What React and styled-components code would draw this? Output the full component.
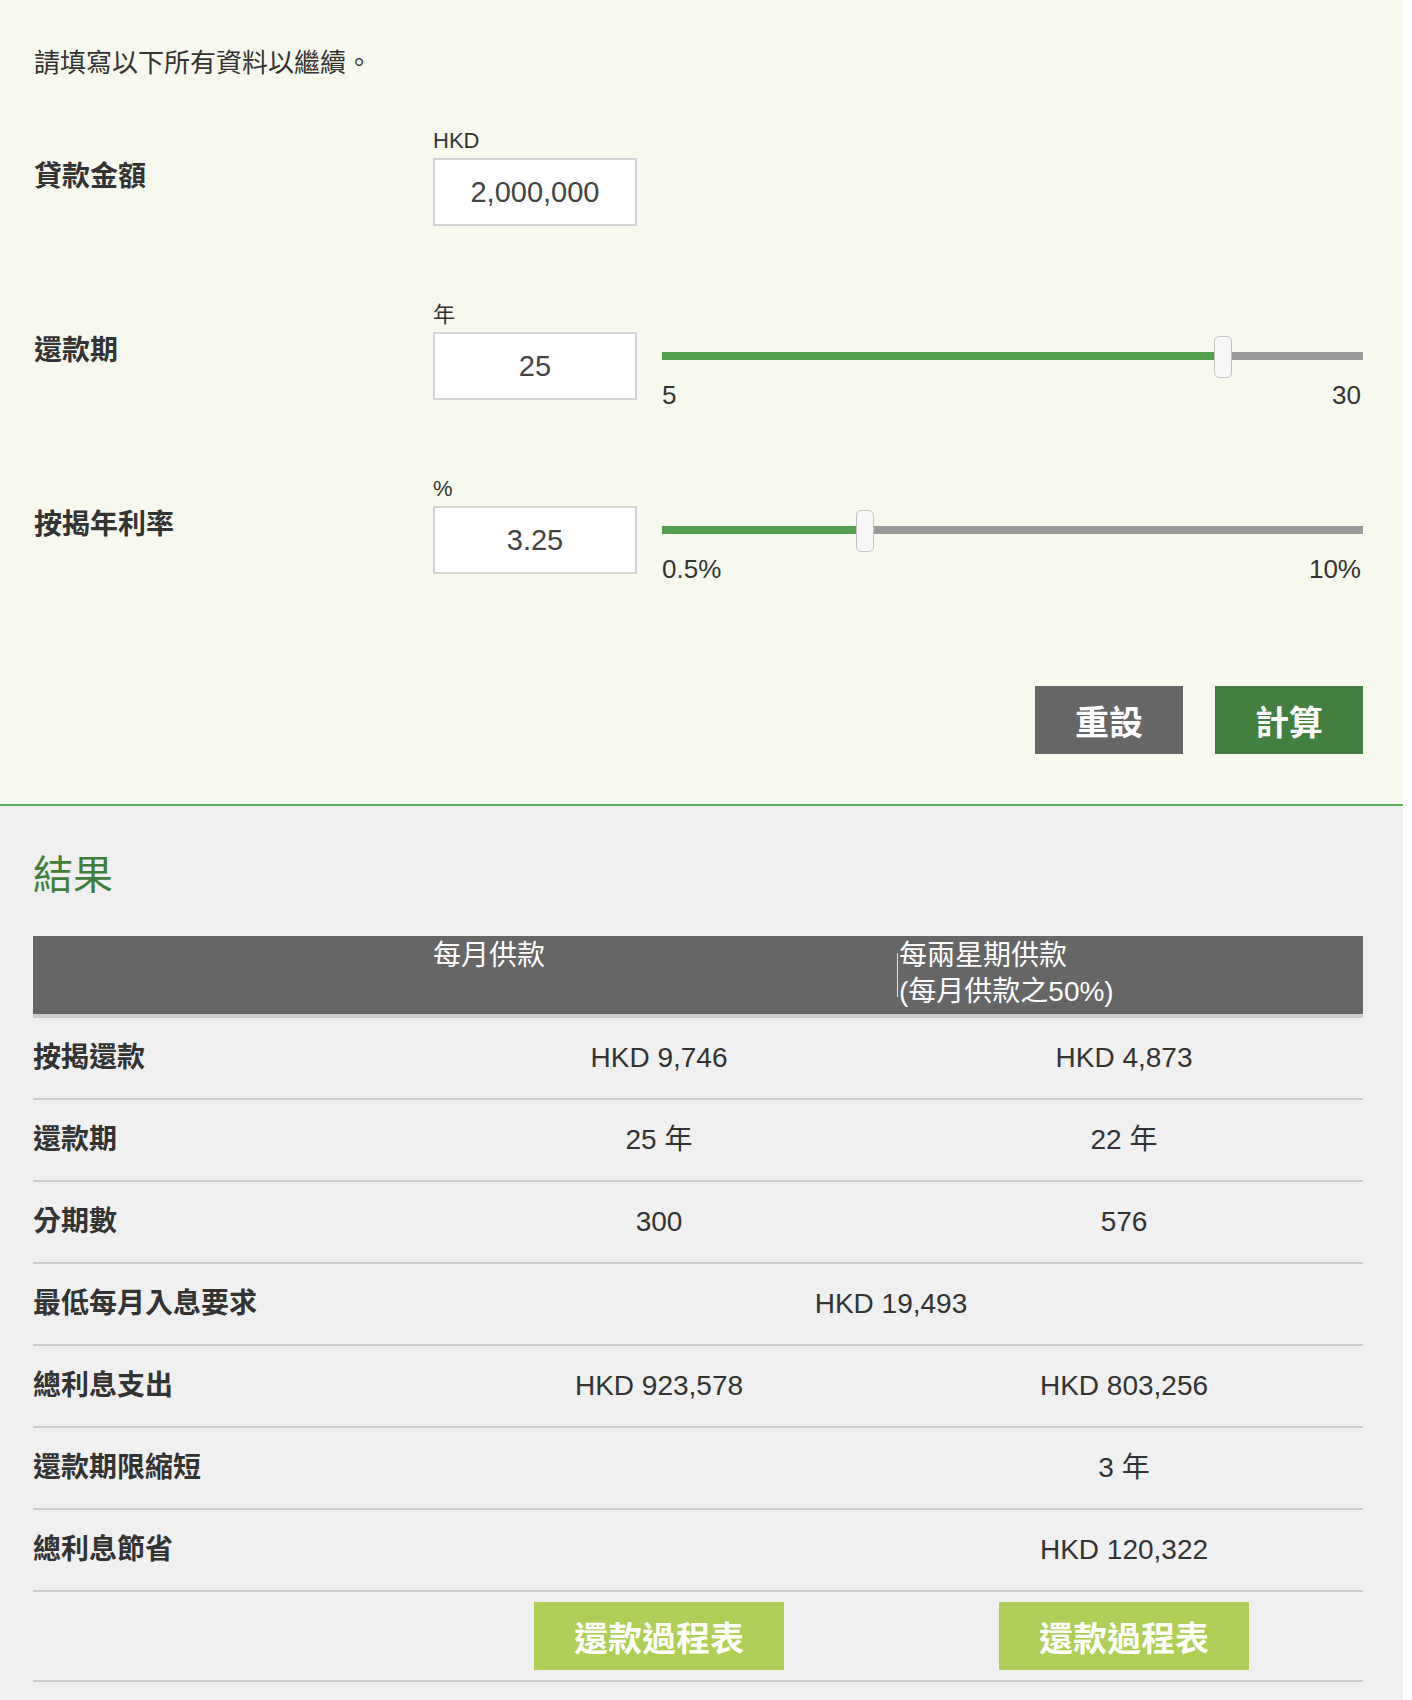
import React from 'react'
import styled, { createGlobalStyle } from 'styled-components'

const GlobalStyle = createGlobalStyle`
    html, body {
        margin: 0;
        padding: 0;
        background: #fff;
    }
    body {
        font-family: "Liberation Sans", "Noto Sans CJK TC", sans-serif;
        color: #333;
    }
`

const fields = [
    { label: '貸款金額', unit: 'HKD', value: '2,000,000' },
    { label: '還款期', unit: '年', value: '25', slider: { min: 5, max: 30, val: 25, minText: '5', maxText: '30' } },
    { label: '按揭年利率', unit: '%', value: '3.25', slider: { min: 0.5, max: 10, val: 3.25, minText: '0.5%', maxText: '10%' } },
]

const results = [
    { label: '按揭還款', monthly: 'HKD 9,746', biweekly: 'HKD 4,873' },
    { label: '還款期', monthly: '25 年', biweekly: '22 年' },
    { label: '分期數', monthly: '300', biweekly: '576' },
    { label: '最低每月入息要求', both: 'HKD 19,493' },
    { label: '總利息支出', monthly: 'HKD 923,578', biweekly: 'HKD 803,256' },
    { label: '還款期限縮短', monthly: '', biweekly: '3 年' },
    { label: '總利息節省', monthly: '', biweekly: 'HKD 120,322' },
]

const Slider = ({ min, max, val, minText, maxText }) => {
    const pct = ((val - min) / (max - min)) * 100
    return (
        <SliderBox>
            <Rail>
                <Track>
                    <Fill style={{ width: `${pct}%` }} />
                </Track>
                <Thumb style={{ left: `${pct}%` }} />
            </Rail>
            <Ends>
                <span>{minText}</span>
                <span>{maxText}</span>
            </Ends>
        </SliderBox>
    )
}

const App = () => {
    return (
        <Page>
            <GlobalStyle />
            <FormSection>
                <Intro>請填寫以下所有資料以繼續。</Intro>
                {fields.map(f => (
                    <FieldRow key={f.label}>
                        <FieldLabel>{f.label}</FieldLabel>
                        <Control>
                            <Unit>{f.unit}</Unit>
                            <span />
                            <NumberInput readOnly value={f.value} />
                            {f.slider ? <Slider {...f.slider} /> : <span />}
                        </Control>
                    </FieldRow>
                ))}
                <ButtonBar>
                    <ActionButton>重設</ActionButton>
                    <ActionButton $primary>計算</ActionButton>
                </ButtonBar>
            </FormSection>

            <ResultSection>
                <ResultTitle>結果</ResultTitle>
                <HeadRow>
                    <div />
                    <HeadCell>每月供款</HeadCell>
                    <HeadCell $marked>
                        每兩星期供款
                        <br />
                        (每月供款之50%)
                    </HeadCell>
                </HeadRow>
                {results.map(r => (
                    <Row key={r.label}>
                        <RowLabel>{r.label}</RowLabel>
                        {r.both ? (
                            <Value $span>{r.both}</Value>
                        ) : (
                            <>
                                <Value>{r.monthly}</Value>
                                <Value>{r.biweekly}</Value>
                            </>
                        )}
                    </Row>
                ))}
                <Row $buttons>
                    <div />
                    <Value>
                        <ScheduleButton>還款過程表</ScheduleButton>
                    </Value>
                    <Value>
                        <ScheduleButton>還款過程表</ScheduleButton>
                    </Value>
                </Row>
            </ResultSection>
        </Page>
    )
}

export default App


const Page = styled.div`
    width: 1403px;
`

// Form
const FormSection = styled.section`
    background: #f7f9ee;
    border-bottom: 2px solid #5db35a;
    padding: 45px 40px 50px 34px;
`

const Intro = styled.p`
    margin: 0 0 47px;
    font-size: 26px;
    line-height: 36px;
`

const FieldRow = styled.div`
    display: flex;
    align-items: center;
    margin-bottom: 76px;
`

const FieldLabel = styled.div`
    width: 399px;
    flex-shrink: 0;
    font-size: 28px;
    font-weight: bold;
    line-height: 36px;
`

const Control = styled.div`
    flex: 1;
    display: grid;
    grid-template-columns: 204px 1fr;
    column-gap: 25px;
    row-gap: 4px;
`

const Unit = styled.div`
    font-size: 22px;
    line-height: 26px;
`

const NumberInput = styled.input`
    box-sizing: border-box;
    width: 204px;
    height: 68px;
    margin: 0;
    padding: 0;
    border: 2px solid #d3d3d3;
    background: #fff;
    text-align: center;
    font-family: "Liberation Sans", sans-serif;
    font-size: 29px;
    color: #444;
    outline: none;
`

const SliderBox = styled.div`
    height: 68px;
    padding-top: 4px;
    box-sizing: border-box;
`

const Rail = styled.div`
    position: relative;
    height: 42px;
    display: flex;
    align-items: center;
`

const Track = styled.div`
    flex: 1;
    height: 8px;
    margin-top: -2px;
    background: #9a9a9a;
    display: flex;
`

const Fill = styled.div`
    height: 100%;
    background: #52a04e;
`

const Thumb = styled.div`
    position: absolute;
    top: 0;
    width: 18px;
    height: 42px;
    box-sizing: border-box;
    border: 1px solid #c2c2c2;
    border-radius: 5px;
    background: #f6f6f6;
    transform: translateX(-50%);
`

const Ends = styled.div`
    display: flex;
    justify-content: space-between;
    margin-top: 4px;
    padding-right: 2px;
    font-size: 26px;
    line-height: 26px;
    color: #333;
`

const ButtonBar = styled.div`
    display: flex;
    justify-content: flex-end;
    gap: 32px;
    margin-top: 112px;
`

const ActionButton = styled.button`
    width: 148px;
    height: 68px;
    padding: 0;
    border: 0;
    background: ${p => (p.$primary ? '#43803e' : '#666')};
    color: #fff;
    font-family: "Liberation Sans", "Noto Sans CJK TC", sans-serif;
    font-size: 34px;
    font-weight: bold;
`

// Results
const ResultSection = styled.section`
    background: #f0f0f0;
    padding: 45px 40px 18px 33px;
`

const ResultTitle = styled.h2`
    margin: 0 0 37px;
    font-size: 40px;
    line-height: 48px;
    font-weight: normal;
    color: #3f7f3a;
`

const HeadRow = styled.div`
    display: grid;
    grid-template-columns: 400px 452px 1fr;
    height: 78px;
    background: #666;
    border-bottom: 4px solid #ccc;
    color: #fff;
    font-size: 28px;
    line-height: 36px;
`

const HeadCell = styled.div`
    padding-top: 2px;
    padding-left: ${p => (p.$marked ? '14px' : '0')};
    background: ${p => (p.$marked ? 'linear-gradient(#e2e2e2, #e2e2e2) 12px 17px / 1px 44px no-repeat' : 'none')};
`

const Row = styled.div`
    display: grid;
    grid-template-columns: 400px 452px 1fr;
    align-items: center;
    height: ${p => (p.$buttons ? '88px' : '80px')};
    border-bottom: 2px solid #ccc;
`

const RowLabel = styled.div`
    font-size: 28px;
    font-weight: bold;
    line-height: 36px;
`

const Value = styled.div`
    grid-column: ${p => (p.$span ? 'span 2' : 'auto')};
    padding-right: ${p => (p.$span ? '14px' : '0')};
    text-align: center;
    font-size: 28px;
    line-height: 36px;
    color: #333;
`

const ScheduleButton = styled.button`
    width: 250px;
    height: 68px;
    padding: 0;
    border: 0;
    background: #aece55;
    color: #fff;
    font-family: "Liberation Sans", "Noto Sans CJK TC", sans-serif;
    font-size: 34px;
    font-weight: bold;
    vertical-align: middle;
`
